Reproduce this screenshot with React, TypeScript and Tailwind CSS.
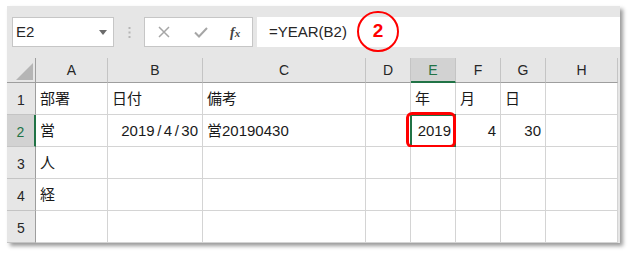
import type { ReactNode } from "react";

const cols = [
  { key: "A", w: 72 },
  { key: "B", w: 95 },
  { key: "C", w: 163 },
  { key: "D", w: 45 },
  { key: "E", w: 45 },
  { key: "F", w: 45 },
  { key: "G", w: 45 },
  { key: "H", w: 72 },
];

type Cell = { text: ReactNode; right?: boolean };

// the sheet font draws a wide slash
const Slash = () => <span className="mx-[2.5px]">/</span>;

const rows: Record<number, Record<string, Cell>> = {
  1: {
    A: { text: "部署" },
    B: { text: "日付" },
    C: { text: "備考" },
    E: { text: "年" },
    F: { text: "月" },
    G: { text: "日" },
  },
  2: {
    A: { text: "営" },
    B: {
      text: (
        <>
          2019<Slash />4<Slash />30
        </>
      ),
      right: true,
    },
    C: { text: "営20190430" },
    E: { text: "2019", right: true },
    F: { text: "4", right: true },
    G: { text: "30", right: true },
  },
  3: { A: { text: "人" } },
  4: { A: { text: "経" } },
  5: {},
};

const ui = "font-['Liberation_Sans',Arial,sans-serif]";
const jp = "font-['Liberation_Sans','Noto_Sans_CJK_JP',sans-serif]";

function Toolbar() {
  return (
    <div className="flex h-[52px] items-center pl-[5px]">
      <div className="flex h-[30px] w-[102px] items-center justify-between border border-[#c6c6c6] bg-white pl-[3px] pr-[6px]">
        <span className={`${ui} text-[15px] text-[#262626]`}>E2</span>
        <svg width="8" height="5" viewBox="0 0 8 5">
          <path d="M0 0h8L4 5z" fill="#6b6b6b" />
        </svg>
      </div>
      <div className="flex w-[30px] justify-center">
        <svg width="3" height="11" viewBox="0 0 3 11">
          <rect x="0.5" y="0" width="2" height="2" fill="#b5b5b5" />
          <rect x="0.5" y="4.5" width="2" height="2" fill="#b5b5b5" />
          <rect x="0.5" y="9" width="2" height="2" fill="#b5b5b5" />
        </svg>
      </div>
      <div className="relative flex h-[30px] w-[109px] items-center border border-[#c6c6c6] bg-white">
        <svg className="ml-[13px]" width="12" height="12" viewBox="0 0 12 12">
          <path d="M1 1l10 10M11 1L1 11" stroke="#a6a6a6" strokeWidth="1.5" />
        </svg>
        <svg className="ml-[24px]" width="14" height="11" viewBox="0 0 14 11">
          <path d="M1 5.5l4 4L13 1" stroke="#a6a6a6" strokeWidth="2" fill="none" />
        </svg>
        <span className="ml-[22px] font-['Liberation_Serif',serif] text-[14px] font-bold italic text-[#444]">
          f<span className="text-[11px]">x</span>
        </span>
      </div>
      <div className="relative ml-[4px] flex h-[30px] flex-1 items-center bg-white pl-[12px]">
        <span className={`${ui} text-[15px] text-[#262626]`}>=YEAR(B2)</span>
        <div className="absolute left-[100px] top-[-6px] flex h-[41px] w-[42px] items-center justify-center rounded-full border-[2.5px] border-[#ff0000]">
          <span className={`${ui} text-[19px] font-bold text-[#ff0000]`}>2</span>
        </div>
      </div>
    </div>
  );
}

function Grid() {
  return (
    <div className="grid w-[611px] grid-cols-[29px_72px_95px_163px_45px_45px_45px_45px_72px] grid-rows-[25px_32px_32px_32px_32px_32px]">
      <div className="relative border-b border-r border-[#9e9e9e]">
        <svg className="absolute bottom-[2px] right-[2px]" width="17" height="17" viewBox="0 0 17 17">
          <path d="M17 0V17H0z" fill="#b5b5b5" />
        </svg>
      </div>
      {cols.map((c) =>
        c.key === "E" ? (
          <div
            key={c.key}
            className={`${ui} flex items-center justify-center border-b-2 border-r border-b-[#217346] border-r-[#c4c4c4] bg-[#d2d2d2] pt-[2px] text-[14px] text-[#217346]`}
          >
            {c.key}
          </div>
        ) : (
          <div
            key={c.key}
            className={`${ui} flex items-center justify-center border-b border-r border-b-[#9e9e9e] border-r-[#c4c4c4] pt-[1px] text-[14px] text-[#262626]`}
          >
            {c.key}
          </div>
        )
      )}
      {[1, 2, 3, 4, 5].map((r) => (
        <Row key={r} r={r} />
      ))}
    </div>
  );
}

function Row({ r }: { r: number }) {
  const sel = r === 2;
  return (
    <>
      <div
        className={
          sel
            ? `${ui} flex items-center justify-center border-b border-r-2 border-b-[#c4c4c4] border-r-[#217346] bg-[#d2d2d2] pt-[3px] text-[14px] text-[#217346]`
            : `${ui} flex items-center justify-center border-b border-r border-b-[#c4c4c4] border-r-[#9e9e9e] pt-[3px] text-[14px] text-[#262626]`
        }
      >
        {r}
      </div>
      {cols.map((c) => {
        const cell = rows[r][c.key];
        const active = sel && c.key === "E";
        return (
          <div
            key={c.key}
            className={`${jp} relative flex items-center border-b border-r border-[#d4d4d4] bg-white px-[4px] pt-[2px] text-[15px] text-[#1a1a1a] ${
              cell?.right ? "justify-end" : "justify-start"
            }`}
          >
            {cell ? <span className="whitespace-nowrap">{cell.text}</span> : null}
            {active ? (
              <>
                <div className="absolute inset-[-1px] border-2 border-[#217346]" />
                <div className="absolute bottom-[-3px] right-[-3px] h-[5px] w-[5px] bg-[#217346]" />
                <div className="absolute left-[-5px] top-[-3px] h-[36px] w-[50px] rounded-[6px] border-[3px] border-[#ff0000]" />
              </>
            ) : null}
          </div>
        );
      })}
    </>
  );
}

export default function App() {
  return (
    <div className="h-[254px] w-[630px] bg-white pl-[7px] pt-[6px]">
      <div className="h-[237px] w-[613px] bg-[#e6e6e6] shadow-[3px_3px_4px_rgba(0,0,0,0.4)]">
        <Toolbar />
        <Grid />
      </div>
    </div>
  );
}
